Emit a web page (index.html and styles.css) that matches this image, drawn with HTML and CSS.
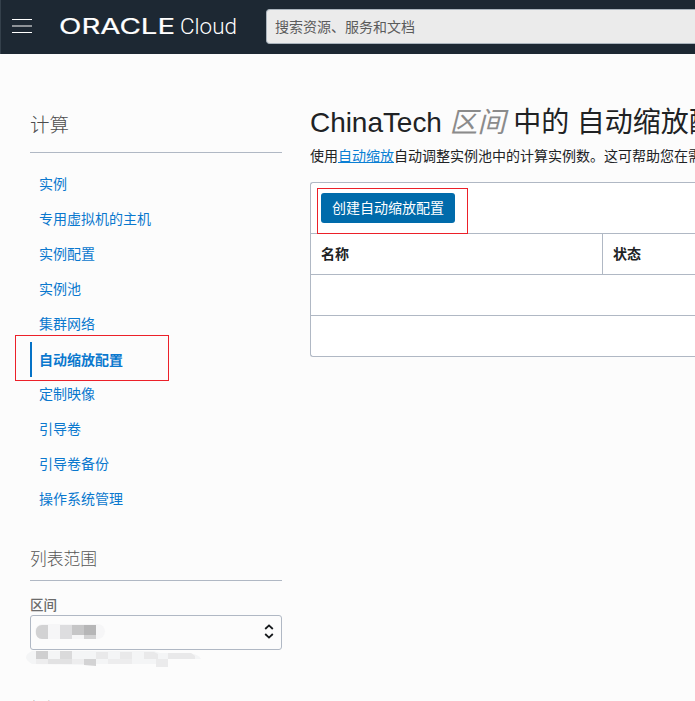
FILE: index.html
```html
<!DOCTYPE html>
<html lang="zh-CN">
<head>
<meta charset="utf-8">
<title>Oracle Cloud</title>
<link rel="stylesheet" href="styles.css">
</head>
<body>
<header class="topbar">
  <svg class="menu" width="20" height="16" viewBox="0 0 20 16"><path d="M0 1.5h20M0 14.5h20" stroke="#fff"/><path d="M0 8h20" stroke="#8e9398" stroke-width="2"/></svg>
  <svg class="logo" width="180" height="30" viewBox="0 0 180 30">
    <text class="brand" x="-1" y="22" textLength="116" lengthAdjust="spacingAndGlyphs">ORACLE</text>
    <text class="product" x="120" y="22" textLength="57" lengthAdjust="spacingAndGlyphs">Cloud</text>
  </svg>
  <div class="search">搜索资源、服务和文档</div>
</header>
<div class="page">
  <aside class="sidebar">
    <h2 class="title">计算</h2>
    <nav class="nav">
      <a>实例</a>
      <a>专用虚拟机的主机</a>
      <a>实例配置</a>
      <a>实例池</a>
      <a>集群网络</a>
      <a class="active">自动缩放配置<span class="mark mark-nav"></span></a>
      <a>定制映像</a>
      <a>引导卷</a>
      <a>引导卷备份</a>
      <a>操作系统管理</a>
    </nav>
    <h3 class="scope">列表范围</h3>
    <div class="label">区间</div>
    <div class="select">
      <svg class="mosaic" width="72" height="16" viewBox="0 0 72 16">
        <rect width="70" height="15" rx="7.5" fill="#f6f6f7"/>
        <path d="M13 1H7a6 6 0 0 0-6 7a6 6 0 0 0 6 7h6z" fill="#d2d2d3"/>
        <path d="M25 1h12v14H25z" fill="#dddddf"/><path d="M37 1h12v10H37z" fill="#c6c6c7"/><path d="M49 1h12v10H49z" fill="#b6b6b7"/><path d="M49 11h12v4H49z" fill="#d2d2d3"/>
      </svg>
      <svg class="arrows" width="10" height="15" viewBox="0 0 10 15" fill="none" stroke="#16191c" stroke-width="1.8"><path d="M1.2 5L5 1.4 8.8 5M1.2 10L5 13.6 8.8 10"/></svg>
    </div>
    <svg class="mosaic-path" width="178" height="18" viewBox="0 0 178 18">
      <path d="M7 1h122l6 2h28q11 1 13 6H143v5H70L58 15 7 14Q-5 7 7 1z" fill="#f4f5f6"/>
      <path d="M11 1h12v8H11z" fill="#cfcfd0"/><path d="M35 1h12v8H35z" fill="#dadadb"/><path d="M71 2h12v7H71zM95 2h12v7H95zM119 2h10l4 2v5h-14zM143 3h23l4 3v3h-27z" fill="#e9e9ea"/>
      <path d="M11 9h12v5H11zM47 9h12v5H47zM83 9h24v5H83z" fill="#ededee"/><path d="M23 9h12v5H23zM35 9h12v5H35z" fill="#e2e2e3"/><path d="M59 9h12v7l-12-1z" fill="#d3d3d4"/><path d="M131 9h12v8h-12z" fill="#ebebec"/>
    </svg>
    <h3 class="filter">标记</h3>
  </aside>
  <main class="main">
    <h1>ChinaTech <em>区间</em> 中的 自动缩放配置</h1>
    <p>使用<a>自动缩放</a>自动调整实例池中的计算实例数。这可帮助您在需要时</p>
    <div class="panel">
      <div class="tools"><button>创建自动缩放配置</button><span class="mark mark-create"></span></div>
      <div class="row head"><div class="cell">名称</div><div class="cell">状态</div></div>
      <div class="row"></div>
      <div class="row"></div>
    </div>
  </main>
</div>
</body>
</html>
```
FILE: styles.css
```css
* { box-sizing: border-box; }
body {
  margin: 0;
  height: 701px;
  overflow: hidden;
  background: #fcfcfc;
  color: #202224;
  font: 14px/20px "Liberation Sans", "Noto Sans CJK SC", sans-serif;
}
h1, h2, h3, p { margin: 0; font-weight: 400; }
.topbar {
  height: 54px;
  display: flex;
  align-items: flex-start;
  overflow: hidden;
  background: #1d2833;
  border-left: 1px solid #34404b;
}
.menu { margin: 18px 0 0 11px; flex: none; }
.logo { margin: 12px 0 0 28px; flex: none; overflow: visible; }
.brand { font: 400 21px Inter, sans-serif; fill: #fff; stroke: #fff; stroke-width: 0.2px; }
.product { font: 300 22.5px Roboto, sans-serif; fill: #fff; }
.search {
  flex: 1;
  height: 35px;
  margin: 9px 0 0 26px;
  padding: 0 8px;
  border: 1px solid #aab4bd;
  border-right: 0;
  border-radius: 4px 0 0 4px;
  background: #ebebeb;
  color: #5b5b5b;
  line-height: 34px;
}
.page { display: flex; gap: 28px; padding-left: 30px; }
.sidebar { width: 252px; flex: none; }
.title {
  height: 99px;
  padding-top: 55px;
  border-bottom: 1px solid #b0b8c4;
  color: #4c4c4c;
  font: 300 19.5px/30px "Noto Sans CJK SC", sans-serif;
}
.nav { display: flex; flex-direction: column; padding-top: 14px; }
.nav a {
  height: 35px;
  padding-left: 9px;
  line-height: 35px;
  color: #0a78ce;
}
.nav .active {
  position: relative;
  height: 36px;
  margin-bottom: -1px;
  line-height: 37px;
  font-weight: 700;
}
.nav .active::before {
  content: "";
  position: absolute;
  left: 0;
  top: 0;
  width: 2px;
  height: 35px;
  background: #0572c6;
}
.mark { position: absolute; border: 1px solid #ec2029; }
.mark-nav { left: -15px; top: -7px; width: 154px; height: 46px; }
.scope {
  height: 64px;
  padding-top: 26px;
  border-bottom: 1px solid #b0b8c4;
  color: #555;
  font: 300 16.8px/30px "Noto Sans CJK SC", sans-serif;
}
.label { margin-top: 15px; line-height: 19px; font-size: 13.5px; font-weight: 500; color: #6b6b6b; }
.select {
  height: 35px;
  padding: 0 7px 0 4px;
  display: flex;
  align-items: center;
  justify-content: space-between;
  border: 1px solid #b0b8c4;
  border-radius: 3px;
}
.mosaic, .arrows { margin-bottom: 2px; }
.mosaic-path { display: block; margin-left: -5px; }
.filter { height: 10px; margin-top: 24px; color: #555; font: 300 16px/30px "Noto Sans CJK SC", sans-serif; }
.main { flex: 1; min-width: 0; padding-top: 50px; white-space: nowrap; overflow: hidden; }
h1 { font-size: 28px; line-height: 38px; letter-spacing: -0.05px; }
h1 em { color: #8b8b8b; }
p { margin-top: 4px; }
p a { color: #0a7fd4; text-decoration: underline; }
.panel {
  margin-top: 16px;
  border: 1px solid #b0b8c4;
  border-right: 0;
  border-radius: 3px 0 0 3px;
  background: #fff;
}
.tools { position: relative; height: 50px; padding: 10px; }
button {
  display: block;
  width: 134px;
  height: 30px;
  padding: 0;
  border: 0;
  border-radius: 3px;
  background: #006bab;
  color: #fff;
  font: inherit;
}
.mark-create { left: 6px; top: 5px; width: 151px; height: 46px; }
.row { height: 41px; border-top: 1px solid #b0b8c4; }
.head { display: flex; line-height: 40px; font-weight: 700; }
.cell { width: 291px; flex: none; padding-left: 10px; }
.cell + .cell { flex: 1; border-left: 1px solid #b0b8c4; }
```
